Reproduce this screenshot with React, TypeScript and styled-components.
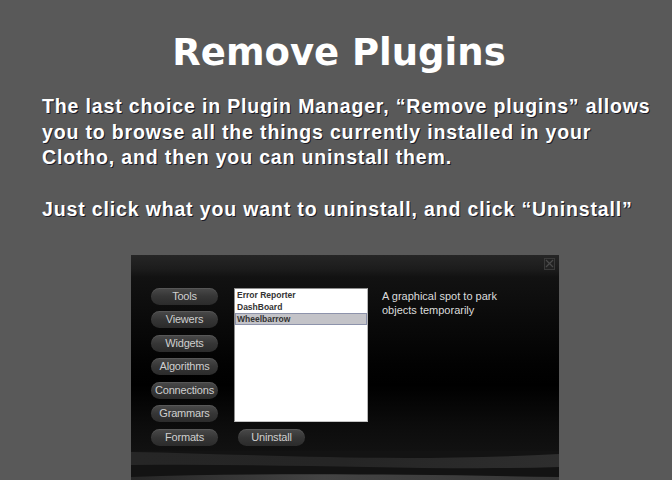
import React from "react";
import styled, { createGlobalStyle } from "styled-components";

const Global = createGlobalStyle`
  html, body { margin: 0; padding: 0; background: #595959; }
  body { width: 672px; height: 480px; overflow: hidden; }
`;

const Page = styled.div`
  width: 672px;
  height: 480px;
  overflow: hidden;
  display: flex;
  flex-direction: column;
  background: #595959;
`;

const Title = styled.h1`
  margin: 29px 0 0 0;
  text-align: center;
  font-family: "DejaVu Sans", Verdana, sans-serif;
  font-weight: bold;
  font-size: 37px;
  line-height: 48px;
  color: #ffffff;
  padding-left: 6px;
`;

const Intro = styled.div`
  margin: 17px 0 0 42px;
  width: 616px;
  font-family: "Liberation Sans", Arial, sans-serif;
  font-weight: bold;
  font-size: 19.5px;
  line-height: 25.7px;
  letter-spacing: 0.85px;
  color: #ffffff;
  text-shadow: 1px 1px 0 #1c1c28;
`;

const Para = styled.p<{ $gap?: boolean }>`
  margin: 0;
  margin-top: ${(p) => (p.$gap ? "25.7px" : "0")};
`;

const Panel = styled.div`
  margin: 32px 0 0 131px;
  width: 428px;
  flex: 1 0 auto;
  display: flex;
  flex-direction: column;
  background: linear-gradient(
    to bottom,
    #262626 0px,
    #1c1c1c 14px,
    #121212 22px,
    #0b0b0b 60px,
    #020202 110px,
    #000000 130px,
    #0c0c0c 170px,
    #121212 200px
  );
`;

const Header = styled.div`
  display: flex;
  justify-content: flex-end;
  padding: 3px 4px 0 0;
`;

const CloseBox = styled.div`
  width: 11px;
  height: 12px;
  box-sizing: border-box;
  border: 1px solid #3a3a3a;
  background: #222;
  display: flex;
  align-items: center;
  justify-content: center;
`;

const Content = styled.div`
  display: flex;
  margin-top: 18px;
  padding-left: 20px;
  align-items: flex-start;
`;

const NavColumn = styled.div`
  display: flex;
  flex-direction: column;
  gap: 6.5px;
`;

const PillButton = styled.div`
  width: 67px;
  height: 17px;
  box-sizing: border-box;
  border-radius: 9px;
  background: linear-gradient(to bottom, #4a4a4a 0%, #363636 50%, #2b2b2b 100%);
  box-shadow: inset 0 1px 0 rgba(255, 255, 255, 0.08);
  color: #cfcfcf;
  font-family: "Liberation Sans", Arial, sans-serif;
  font-size: 11px;
  line-height: 17px;
  text-align: center;
  white-space: nowrap;
  letter-spacing: -0.2px;
`;

const ListColumn = styled.div`
  display: flex;
  flex-direction: column;
  gap: 7px;
  margin-left: 16px;
`;

const ListBox = styled.div`
  width: 134px;
  height: 134px;
  box-sizing: border-box;
  background: #ffffff;
  border: 1px solid #8e8e8e;
  border-right-color: #b8b8b8;
  border-bottom-color: #c4c4c4;
  display: flex;
  flex-direction: column;
`;

const ListItem = styled.div<{ $selected?: boolean }>`
  height: 12px;
  box-sizing: border-box;
  padding-left: 1px;
  font-family: "Liberation Sans", Arial, sans-serif;
  font-weight: bold;
  font-size: 8.5px;
  line-height: 11px;
  color: #333;
  background: ${(p) => (p.$selected ? "#c3c3c8" : "transparent")};
  border: 1px solid ${(p) => (p.$selected ? "#8d93ab" : "transparent")};
`;

const UninstallRow = styled.div`
  padding-left: 4px;
`;

const Description = styled.div`
  margin-left: 14px;
  margin-top: 1px;
  width: 130px;
  font-family: "Liberation Sans", Arial, sans-serif;
  font-size: 11px;
  line-height: 14px;
  color: #dcdcdc;
`;

const Waves = styled.svg`
  display: block;
  margin-top: 5px;
  width: 428px;
  height: 32px;
`;

const navItems = ["Tools", "Viewers", "Widgets", "Algorithms", "Connections", "Grammars", "Formats"];
const plugins = ["Error Reporter", "DashBoard", "Wheelbarrow"];

export default function App() {
  return (
    <Page>
      <Global />
      <Title>Remove Plugins</Title>
      <Intro>
        <Para>
          The last choice in Plugin Manager, “Remove plugins” allows you to browse all the things currently
          installed in your Clotho, and then you can uninstall them.
        </Para>
        <Para $gap>Just click what you want to uninstall, and click “Uninstall”</Para>
      </Intro>
      <Panel>
        <Header>
          <CloseBox>
            <svg width="9" height="9" viewBox="0 0 9 9">
              <path d="M1 1 L8 8 M8 1 L1 8" stroke="#4a4a4a" strokeWidth="1.3" />
            </svg>
          </CloseBox>
        </Header>
        <Content>
          <NavColumn>
            {navItems.map((n) => (
              <PillButton key={n}>{n}</PillButton>
            ))}
          </NavColumn>
          <ListColumn>
            <ListBox>
              {plugins.map((p) => (
                <ListItem key={p} $selected={p === "Wheelbarrow"}>
                  {p}
                </ListItem>
              ))}
            </ListBox>
            <UninstallRow>
              <PillButton>Uninstall</PillButton>
            </UninstallRow>
          </ListColumn>
          <Description>A graphical spot to park objects temporarily</Description>
        </Content>
        <Waves viewBox="0 0 428 32" preserveAspectRatio="none">
          <defs>
            <linearGradient id="w1" x1="0" y1="0" x2="1" y2="0">
              <stop offset="0" stopColor="#262626" />
              <stop offset="0.5" stopColor="#252525" />
              <stop offset="1" stopColor="#2e2e2e" />
            </linearGradient>
            <linearGradient id="w2" x1="0" y1="0" x2="1" y2="0">
              <stop offset="0" stopColor="#262626" />
              <stop offset="0.45" stopColor="#444" />
              <stop offset="1" stopColor="#363636" />
            </linearGradient>
          </defs>
          <rect x="0" y="0" width="428" height="32" fill="#131313" />
          <path d="M0 1 C120 3 260 12 428 3 L428 16 C300 20 150 12 0 14 Z" fill="url(#w1)" />
          <path d="M0 32 L0 26 C120 22 260 23 428 26 L428 32 Z" fill="url(#w2)" />
        </Waves>
      </Panel>
    </Page>
  );
}
